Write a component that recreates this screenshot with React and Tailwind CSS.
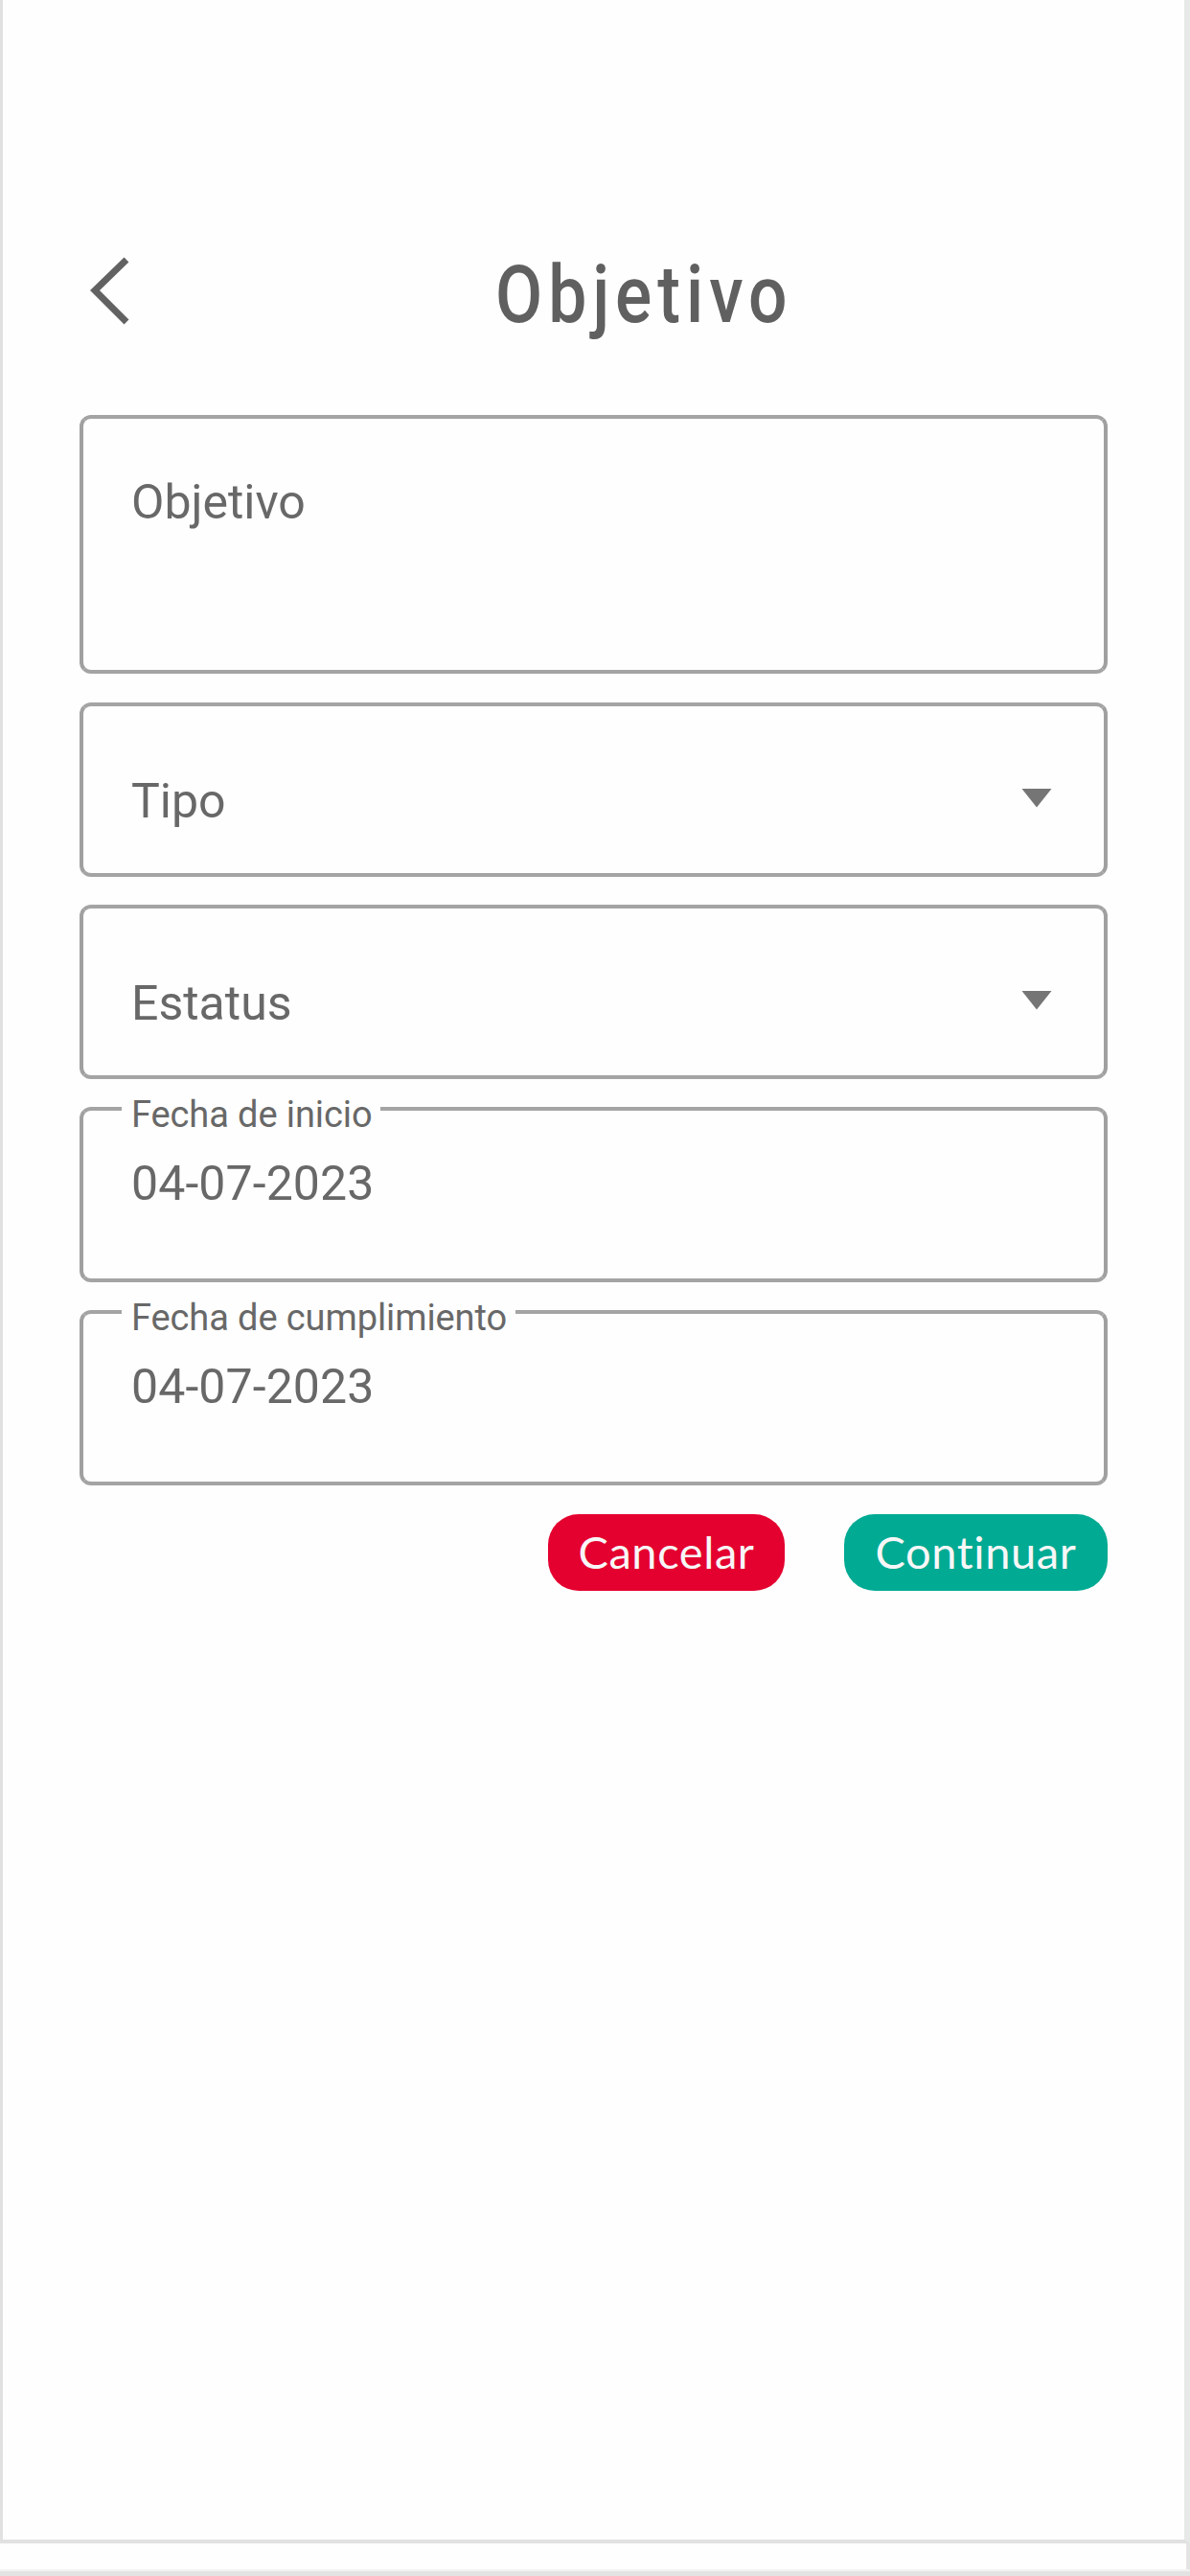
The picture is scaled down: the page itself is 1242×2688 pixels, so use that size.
import clsx from 'clsx'

/** Outlined box shared by every input of the form */
function Field({ className, children }) {
  return (
    <div
      className={clsx(
        'relative flex w-full rounded-[12px] border-[4px] border-x-[#a0a0a0] border-y-[#a4a4a4] px-[50px] text-[50px] leading-[60px] text-[#686868]',
        className
      )}
    >
      {children}
    </div>
  )
}

function SelectField({ label }) {
  return (
    <Field className="h-[182px] items-start justify-between pt-[61px]">
      <span className="pt-[8px]">{label}</span>
      <svg className="mt-[25px] mr-[4px] h-[20px] w-[32px]" viewBox="0 0 32 20" fill="#757575">
        <path d="M0.5 0h31L16 19.5z" />
      </svg>
    </Field>
  )
}

function DateField({ label, value }) {
  return (
    <Field className="h-[183px] items-start pt-[46px]">
      {/* Floating label cuts through the top border */}
      <label className="absolute -top-[18px] left-[40px] bg-[#fefefe] pr-[9px] pl-[10px] text-[38px] leading-[44px] tracking-[-0.1px] whitespace-nowrap">
        {label}
      </label>
      <span className="tracking-[0.1px]">{value}</span>
    </Field>
  )
}

function Button({ className, children }) {
  return (
    <button
      className={clsx(
        "flex h-[80px] items-center justify-center rounded-[32px] pb-[1px] font-['Lato',sans-serif] text-[47px] leading-none tracking-[0.6px] text-[#f7f7f7] [font-variant-ligatures:none]",
        className
      )}
    >
      {children}
    </button>
  )
}

export default function App() {
  return (
    <div className="flex h-[2688px] w-[1242px] flex-col bg-white font-['Roboto',sans-serif]">
      <div className="flex h-[2654px] flex-col border-r-[6px] border-b-[4px] border-l-[3px] border-r-[#e7e9e9] border-b-[#e1e1e1] border-l-[#e1e1e1] bg-[#fefefe] pr-[80px] pl-[80px]">
        <header className="flex h-[433px] items-start pt-[247px]">
          <svg
            className="mt-[20px] ml-[11px] h-[72px] w-[42px] shrink-0"
            viewBox="0 0 42 72"
            fill="none"
            stroke="#626262"
            strokeWidth="7"
          >
            <path d="M38 4L5 36l33 33" />
          </svg>
          <h1 className="ml-[381px] origin-left scale-x-[0.85] text-[84px] leading-[122px] font-medium tracking-[7px] text-[#606060]">
            Objetivo
          </h1>
        </header>

        <form className="flex flex-col">
          <Field className="h-[270px] items-start pt-[57px]">Objetivo</Field>
          <div className="mt-[30px] flex flex-col gap-[29px]">
            <SelectField label="Tipo" />
            <SelectField label="Estatus" />
            <DateField label="Fecha de inicio" value="04-07-2023" />
            <DateField label="Fecha de cumplimiento" value="04-07-2023" />
          </div>

          <div className="mt-[30px] flex justify-end gap-[62px]">
            <Button className="w-[247px] bg-[#e4002f]">Cancelar</Button>
            <Button className="w-[275px] bg-[#00aa93]">Continuar</Button>
          </div>
        </form>
      </div>

      <div className="h-[27px] border-r-[4px] border-[#e4e4e4] bg-[#fefefe]" />
      <div className="h-[7px] border-t-[2px] border-[#f2f2f2] bg-[#e3e3e3]" />
    </div>
  )
}
